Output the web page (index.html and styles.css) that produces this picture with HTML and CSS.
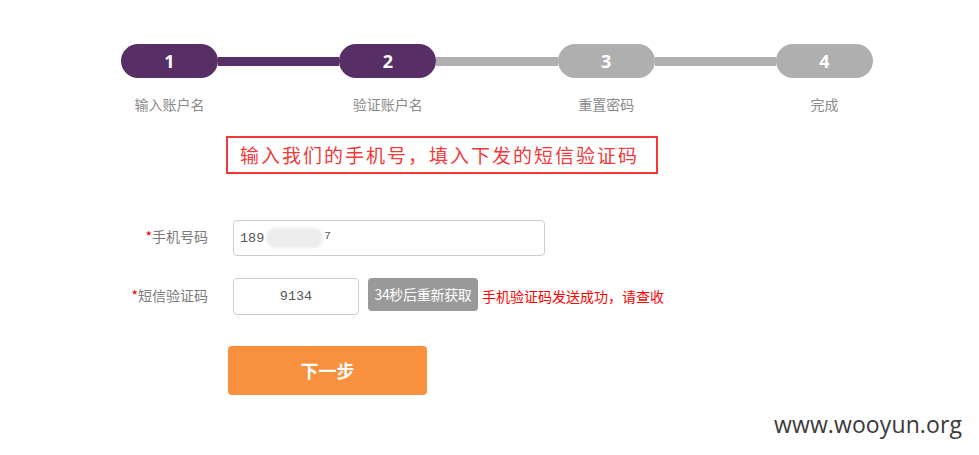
FILE: index.html
```html
<!DOCTYPE html>
<html lang="zh-CN">
<head>
<meta charset="utf-8">
<title>找回密码</title>
<link rel="stylesheet" href="styles.css">
</head>
<body>
<div class="page">
  <div class="steps">
    <div class="step done"><div class="pill">1</div><div class="step-label">输入账户名</div></div>
    <div class="line done"></div>
    <div class="step done"><div class="pill">2</div><div class="step-label">验证账户名</div></div>
    <div class="line"></div>
    <div class="step"><div class="pill">3</div><div class="step-label">重置密码</div></div>
    <div class="line"></div>
    <div class="step"><div class="pill">4</div><div class="step-label">完成</div></div>
  </div>

  <div class="notice">输入我们的手机号，填入下发的短信验证码</div>

  <div class="form">
    <div class="row">
      <div class="label"><span class="star">*</span>手机号码</div>
      <div class="input phone"><span>189</span><span class="mask"></span><span class="tail">7</span></div>
    </div>
    <div class="row">
      <div class="label"><span class="star">*</span>短信验证码</div>
      <div class="input code">9134</div>
      <div class="resend">34秒后重新获取</div>
      <div class="sent">手机验证码发送成功，请查收</div>
    </div>
    <div class="actions">
      <div class="next">下一步</div>
    </div>
  </div>

  <div class="watermark">www.wooyun.org</div>
</div>
</body>
</html>
```
FILE: styles.css
```css
html, body {
  margin: 0;
  padding: 0;
  background: #fff;
}
body {
  font-family: "Noto Sans CJK SC", "Noto Sans", sans-serif;
  width: 979px;
  height: 455px;
  overflow: hidden;
}
.page {
  position: relative;
  width: 979px;
  height: 455px;
  padding-top: 44px;
  box-sizing: border-box;
}
.steps {
  display: flex;
  margin-left: 121px;
  width: 752px;
}
.step {
  width: 97px;
  display: flex;
  flex-direction: column;
  align-items: center;
  flex: none;
}
.pill {
  width: 97px;
  height: 34px;
  border-radius: 17px;
  background: #afafaf;
  color: #fff;
  font-family: "Open Sans", "Noto Sans", sans-serif;
  font-weight: 700;
  font-size: 18px;
  line-height: 34px;
  text-align: center;
}
.step.done .pill {
  background: #582e66;
}
.line {
  flex: 1;
  height: 9px;
  margin-top: 13px;
  background: #afafaf;
}
.line.done {
  background: #582e66;
}
.step-label {
  margin-top: 16px;
  font-size: 14px;
  line-height: 20px;
  color: #8a8a8a;
  white-space: nowrap;
}
.notice {
  margin-left: 226px;
  margin-top: 22px;
  width: 432px;
  height: 38px;
  box-sizing: border-box;
  border: 2px solid #f03a3a;
  padding-left: 12px;
  font-size: 19px;
  letter-spacing: 2px;
  line-height: 34px;
  color: #f03a3a;
  white-space: nowrap;
}
.form {
  margin-top: 46px;
}
.row {
  display: flex;
  align-items: center;
  margin-bottom: 22px;
}
.label {
  width: 208px;
  box-sizing: border-box;
  text-align: right;
  font-size: 14px;
  color: #7a7a7a;
  margin-right: 25px;
  margin-top: -4px;
}
.star {
  color: #e00;
}
.input {
  box-sizing: border-box;
  border: 1px solid #ccc;
  border-radius: 4px;
  height: 37px;
  font-family: "Liberation Mono", monospace;
  font-size: 13.5px;
  color: #555;
  display: flex;
  align-items: center;
}
.phone {
  width: 312px;
  height: 36px;
  padding-left: 6px;
}
.mask {
  display: inline-block;
  width: 57px;
  height: 20px;
  border-radius: 9px;
  background: #ececec;
  filter: blur(1.5px);
  margin-left: 2px;
}
.tail {
  font-size: 11px;
  align-self: flex-start;
  margin-top: 9px;
  margin-left: 1px;
}
.code {
  width: 126px;
  justify-content: center;
}
.resend {
  margin-left: 9px;
  width: 110px;
  height: 33px;
  align-self: flex-start;
  border-radius: 4px;
  background: #999;
  color: #fff;
  font-size: 14px;
  line-height: 33px;
  text-align: center;
  white-space: nowrap;
  letter-spacing: -0.3px;
}
.sent {
  margin-left: 4px;
  font-size: 14px;
  color: #f00;
  white-space: nowrap;
  margin-top: -1px;
}
.actions {
  margin-left: 228px;
  margin-top: 31px;
}
.next {
  width: 199px;
  height: 49px;
  border-radius: 4px;
  background: #f8903e;
  color: #fff;
  font-size: 18px;
  font-weight: 700;
  line-height: 49px;
  text-align: center;
}
.watermark {
  position: absolute;
  right: 17px;
  top: 408px;
  font-family: "Open Sans", "Noto Sans", sans-serif;
  font-size: 23px;
  color: #3a3a3a;
  letter-spacing: 0.1px;
}
```
